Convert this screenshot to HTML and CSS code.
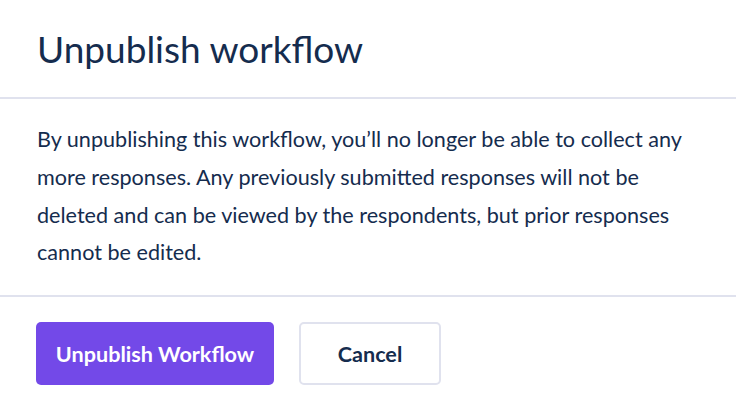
FILE: index.html
```html
<!DOCTYPE html>
<html>
<head>
<meta charset="utf-8">
<link rel="stylesheet" href="styles.css">
</head>
<body>
<div class="modal">
  <div class="modal-header">
    <h1 class="title">Unpublish workflow</h1>
  </div>
  <div class="modal-body">
    <p class="text">By unpublishing this workflow, you’ll no longer be able to collect any more responses. Any previously submitted responses will not be deleted and can be viewed by the respondents, but prior responses cannot be edited.</p>
  </div>
  <div class="modal-footer">
    <button class="btn btn-primary">Unpublish Workflow</button>
    <button class="btn btn-secondary">Cancel</button>
  </div>
</div>
</body>
</html>
```

FILE: styles.css
```css
* { box-sizing: border-box; }
html, body { margin: 0; padding: 0; background: #ffffff; }
body { font-family: Lato, "Open Sans", sans-serif; color: #152c4e; }
.modal { width: 736px; }
.modal-header {
  height: 99px;
  padding: 0 37px;
  display: flex;
  align-items: center;
  border-bottom: 2px solid #e0e2ee;
}
.title {
  margin: 0;
  font-size: 37px;
  font-weight: 400;
  color: #152c4e;
  line-height: 1;
}
.modal-body {
  padding: 22px 37px 23px;
  border-bottom: 2px solid #e0e2ee;
}
.text {
  margin: 0;
  font-size: 21.6px;
  line-height: 1.75;
  color: #152c4e;
}
.modal-footer {
  padding: 25px 36px;
  display: flex;
  gap: 25px;
}
.btn {
  font-family: Lato, "Open Sans", sans-serif;
  font-size: 21.6px;
  font-weight: 700;
  height: 63px;
  border-radius: 5px;
  cursor: pointer;
}
.btn-primary {
  width: 238px;
  background: #7349e8;
  color: #ffffff;
  border: none;
}
.btn-secondary {
  width: 142px;
  background: #ffffff;
  color: #152c4e;
  border: 2px solid #e0e2ee;
}
```
